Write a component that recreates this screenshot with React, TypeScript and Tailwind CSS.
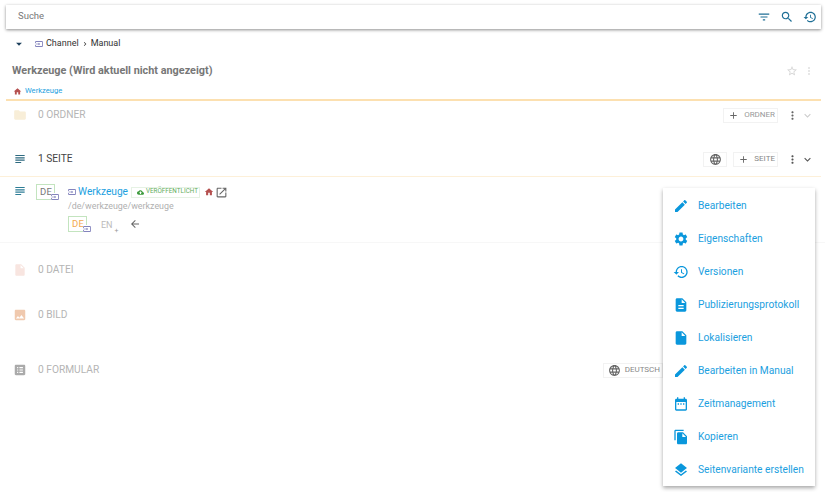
const P: Record<string, string> = {
  filter: "M10 18h4v-2h-4v2zM3 6v2h18V6H3zm3 7h12v-2H6v2z",
  search: "M15.5 14h-.79l-.28-.27C15.41 12.59 16 11.11 16 9.5 16 5.91 13.09 3 9.5 3S3 5.91 3 9.5 5.91 16 9.5 16c1.61 0 3.09-.59 4.23-1.57l.27.28v.79l5 4.99L20.49 19l-4.99-5zm-6 0C7.01 14 5 11.99 5 9.5S7.01 5 9.5 5 14 7.01 14 9.5 11.99 14 9.5 14z",
  history: "M13 3c-4.97 0-9 4.03-9 9H1l3.89 3.89.07.14L9 12H6c0-3.87 3.13-7 7-7s7 3.13 7 7-3.13 7-7 7c-1.93 0-3.68-.79-4.94-2.06l-1.42 1.42C8.27 19.99 10.51 21 13 21c4.97 0 9-4.03 9-9s-4.03-9-9-9zm-1 5v5l4.28 2.54.72-1.21-3.5-2.08V8H12z",
  edit: "M3 17.25V21h3.75L17.81 9.94l-3.75-3.75L3 17.25zM20.71 7.04c.39-.39.39-1.02 0-1.41l-2.34-2.34c-.39-.39-1.02-.39-1.41 0l-1.83 1.83 3.75 3.75 1.83-1.83z",
  settings: "M19.14 12.94c.04-.3.06-.61.06-.94 0-.32-.02-.64-.07-.94l2.03-1.58c.18-.14.23-.41.12-.61l-1.92-3.32c-.12-.22-.37-.29-.59-.22l-2.39.96c-.5-.38-1.03-.7-1.62-.94l-.36-2.54c-.04-.24-.24-.41-.48-.41h-3.84c-.24 0-.43.17-.47.41l-.36 2.54c-.59.24-1.13.57-1.62.94l-2.39-.96c-.22-.08-.47 0-.59.22L2.74 8.87c-.12.21-.08.47.12.61l2.03 1.58c-.05.3-.09.63-.09.94s.02.64.07.94l-2.03 1.58c-.18.14-.23.41-.12.61l1.92 3.32c.12.22.37.29.59.22l2.39-.96c.5.38 1.03.7 1.62.94l.36 2.54c.05.24.24.41.48.41h3.84c.24 0 .44-.17.47-.41l.36-2.54c.59-.24 1.13-.56 1.62-.94l2.39.96c.22.08.47 0 .59-.22l1.92-3.32c.12-.22.07-.47-.12-.61l-2.01-1.58zM12 15.6c-1.98 0-3.6-1.62-3.6-3.6s1.62-3.6 3.6-3.6 3.6 1.62 3.6 3.6-1.62 3.6-3.6 3.6z",
  description: "M14 2H6c-1.1 0-1.99.9-1.99 2L4 20c0 1.1.89 2 1.99 2H18c1.1 0 2-.9 2-2V8l-6-6zm2 16H8v-2h8v2zm0-4H8v-2h8v2zm-3-5V3.5L18.5 9H13z",
  file: "M6 2c-1.1 0-1.99.9-1.99 2L4 20c0 1.1.89 2 1.99 2H18c1.1 0 2-.9 2-2V8l-6-6H6zm7 7V3.5L18.5 9H13z",
  calendar: "M9 11H7v2h2v-2zm4 0h-2v2h2v-2zm4 0h-2v2h2v-2zm2-7h-1V2h-2v2H8V2H6v2H5c-1.11 0-1.99.9-1.99 2L3 20c0 1.1.89 2 2 2h14c1.1 0 2-.9 2-2V6c0-1.1-.9-2-2-2zm0 16H5V9h14v11z",
  copy: "M16 1H4c-1.1 0-2 .9-2 2v14h2V3h12V1zm-1 4l6 6v10c0 1.1-.9 2-2 2H7.99C6.89 23 6 22.1 6 21l.01-14c0-1.1.89-2 1.99-2h7zm-1 7h5.5L14 6.5V12z",
  layers: "M11.99 18.54l-7.37-5.73L3 14.07l9 7 9-7-1.63-1.27-7.38 5.74zM12 16l7.36-5.73L21 9l-9-7-9 7 1.63 1.27L12 16z",
  folder: "M10 4H4c-1.1 0-1.99.9-1.99 2L2 18c0 1.1.9 2 2 2h16c1.1 0 2-.9 2-2V8c0-1.1-.9-2-2-2h-8l-2-2z",
  subject: "M14 17H4v2h10v-2zm6-8H4v2h16V9zM4 15h16v-2H4v2zM4 5v2h16V5H4z",
  image: "M21 19V5c0-1.1-.9-2-2-2H5c-1.1 0-2 .9-2 2v14c0 1.1.9 2 2 2h14c1.1 0 2-.9 2-2zM8.5 13.5l2.5 3.01L14.5 12l4.5 6H5l3.5-4.5z",
  form: "M19 3H5c-1.1 0-2 .9-2 2v14c0 1.1.9 2 2 2h14c1.1 0 2-.9 2-2V5c0-1.1-.9-2-2-2zM9 17H7v-2h2v2zm0-4H7v-2h2v2zm0-4H7V7h2v2zm8 8h-6v-2h6v2zm0-4h-6v-2h6v2zm0-4h-6V7h6v2z",
  home: "M10 20v-6h4v6h5v-8h3L12 3 2 12h3v8z",
  open: "M19 19H5V5h7V3H5c-1.11 0-2 .9-2 2v14c0 1.1.89 2 2 2h14c1.1 0 2-.9 2-2v-7h-2v7zM14 3v2h3.59l-9.83 9.83 1.41 1.41L19 6.41V10h2V3h-7z",
  language: "M11.99 2C6.47 2 2 6.48 2 12s4.47 10 9.99 10C17.52 22 22 17.52 22 12S17.52 2 11.99 2zm6.93 6h-2.95c-.32-1.25-.78-2.45-1.38-3.56 1.84.63 3.37 1.91 4.33 3.56zM12 4.04c.83 1.2 1.48 2.53 1.91 3.96h-3.82c.43-1.43 1.08-2.76 1.91-3.96zM4.26 14C4.1 13.36 4 12.69 4 12s.1-1.36.26-2h3.38c-.08.66-.14 1.32-.14 2 0 .68.06 1.34.14 2H4.26zm.82 2h2.95c.32 1.25.78 2.45 1.38 3.56-1.84-.63-3.37-1.9-4.33-3.56zm2.95-8H5.08c.96-1.66 2.49-2.93 4.33-3.56C8.81 5.55 8.35 6.75 8.03 8zM12 19.96c-.83-1.2-1.48-2.53-1.91-3.96h3.82c-.43 1.43-1.08 2.76-1.91 3.96zM14.34 14H9.66c-.09-.66-.16-1.32-.16-2 0-.68.07-1.35.16-2h4.68c.09.65.16 1.32.16 2 0 .68-.07 1.34-.16 2zm.25 5.56c.6-1.11 1.06-2.31 1.38-3.56h2.95c-.96 1.65-2.49 2.93-4.33 3.56zM16.36 14c.08-.66.14-1.32.14-2 0-.68-.06-1.34-.14-2h3.38c.16.64.26 1.31.26 2s-.1 1.36-.26 2h-3.38z",
  star: "M22 9.24l-7.19-.62L12 2 9.19 8.63 2 9.24l5.46 4.73L5.82 21 12 17.27 18.18 21l-1.63-7.03L22 9.24zM12 15.4l-3.76 2.27 1-4.28-3.32-2.88 4.38-.38L12 6.1l1.71 4.04 4.38.38-3.32 2.88 1 4.28L12 15.4z",
  more: "M12 8c1.1 0 2-.9 2-2s-.9-2-2-2-2 .9-2 2 .9 2 2 2zm0 2c-1.1 0-2 .9-2 2s.9 2 2 2 2-.9 2-2-.9-2-2-2zm0 6c-1.1 0-2 .9-2 2s.9 2 2 2 2-.9 2-2-.9-2-2-2z",
  expand: "M16.59 8.59L12 13.17 7.41 8.59 6 10l6 6 6-6z",
  add: "M19 13h-6v6h-2v-6H5v-2h6V5h2v6h6v2z",
  drop: "M7 10l5 5 5-5z",
  chevron: "M10 6L8.59 7.41 13.17 12l-4.58 4.59L10 18l6-6z",
  back: "M20 11H7.83l5.59-5.59L12 4l-8 8 8 8 1.41-1.41L7.83 13H20v-2z",
  cloud: "M19.35 10.04C18.67 6.59 15.64 4 12 4 9.11 4 6.6 5.64 5.35 8.04 2.34 8.36 0 10.91 0 14c0 3.31 2.69 6 6 6h13c2.76 0 5-2.24 5-5 0-2.64-2.05-4.78-4.65-4.96zM14 13v4h-4v-4H7l5-5 5 5h-3z",
  input: "M21 3.01H3c-1.1 0-2 .9-2 2V9h2V4.99h18v14.03H3V15H1v4.01c0 1.1.9 1.98 2 1.98h18c1.1 0 2-.88 2-1.98v-14c0-1.11-.9-2-2-2zM11 16l4-4-4-4v3H1v2h10v3z",
};

function I({ n, s, c }: { n: string; s: string; c: string }) {
  return (
    <svg viewBox="0 0 24 24" className={`${s} ${c} shrink-0 fill-current`}>
      <path d={P[n]} />
    </svg>
  );
}

function Btn({ label, dim }: { label: string; dim?: boolean }) {
  return (
    <div className={`flex h-[15px] items-center gap-[5px] border border-[#f2f2f2] pl-[4px] pr-[2px] text-[8px] ${dim ? "text-[#999]" : "text-[#888]"}`}>
      <I n="add" s="w-[11px] h-[11px]" c="text-[#666]" />
      <span>{label}</span>
    </div>
  );
}

function Flag({ code, color, left }: { code: string; color: string; left: string }) {
  return (
    <div className={`relative ${left}`}>
      <div className={`flex h-[16px] w-[19px] items-center justify-start border border-[#c3e4bf] pl-[3px] text-[9.5px] tracking-[0.2px] ${color}`}>
        {code}
      </div>
      <I n="input" s="absolute -right-[4px] -bottom-[1px] w-[8px] h-[8px] bg-white" c="text-[#5c5ca8]" />
    </div>
  );
}

function Section({ icon, iconColor, label, h, children }: { icon: string; iconColor: string; label: string; h: string; children?: React.ReactNode }) {
  return (
    <div className={`flex ${h} items-center pl-[13px] pr-[11px]`}>
      <I n={icon} s="w-[14px] h-[14px]" c={iconColor} />
      <span className="ml-[11px] text-[10.2px] text-[#b5b5b5]">{label}</span>
      <div className="ml-auto flex items-center">{children}</div>
    </div>
  );
}

const menu: [string, string][] = [
  ["edit", "Bearbeiten"],
  ["settings", "Eigenschaften"],
  ["history", "Versionen"],
  ["description", "Publizierungsprotokoll"],
  ["file", "Lokalisieren"],
  ["edit", "Bearbeiten in Manual"],
  ["calendar", "Zeitmanagement"],
  ["copy", "Kopieren"],
  ["layers", "Seitenvariante erstellen"],
];

export default function App() {
  return (
    <div className="relative h-[492px] w-[825px] overflow-hidden bg-white font-['Roboto',sans-serif]">
      <div className="pl-[6px] pr-[4px] pt-[5px]">
        <div className="flex h-[24px] items-center bg-white pb-[1px] pl-[12px] pr-[4px] text-[9.5px] text-[#777] shadow-[0_1px_3px_rgba(0,0,0,0.45)]">
          <span>Suche</span>
          <div className="ml-auto flex items-center gap-[9px]">
            <I n="filter" s="w-[14px] h-[14px]" c="text-[#1f6f96]" />
            <I n="search" s="w-[14px] h-[14px]" c="text-[#1f6f96]" />
            <I n="history" s="w-[14px] h-[14px]" c="text-[#1f6f96]" />
          </div>
        </div>
      </div>

      <div className="mt-[8px] flex h-[13px] items-center pl-[12px] text-[9px] text-[#333]">
        <I n="drop" s="w-[14px] h-[14px]" c="text-[#1c3f5c]" />
        <I n="input" s="ml-[9px] w-[8px] h-[8px]" c="text-[#5c5ca8]" />
        <span className="ml-[3px]">Channel</span>
        <I n="chevron" s="mx-[2px] w-[8px] h-[8px]" c="text-[#333]" />
        <span>Manual</span>
      </div>

      <div className="mt-[13px] flex h-[16px] items-center pl-[12px] pr-[10px]">
        <span className="text-[10.85px] font-bold text-[#777]">Werkzeuge (Wird aktuell nicht angezeigt)</span>
        <I n="star" s="ml-auto w-[12px] h-[12px]" c="text-[#d5d5d5]" />
        <I n="more" s="ml-[5px] w-[12px] h-[12px]" c="text-[#e2e2e2]" />
      </div>

      <div className="mt-[5px] flex h-[14px] items-center pl-[13px] text-[7.6px] text-[#1ca0e0]">
        <I n="home" s="w-[9px] h-[9px]" c="text-[#b5504f]" />
        <span className="ml-[3px]">Werkzeuge</span>
      </div>

      <div className="ml-[6px] mr-[4px] mt-[1px] h-[2px] bg-[#fce0b0]" />

      <Section icon="folder" iconColor="text-[#f8eed8]" label="0 ORDNER" h="h-[28px]">
        <Btn label="ORDNER" dim />
        <I n="more" s="ml-[8px] w-[13px] h-[13px]" c="text-[#666]" />
        <I n="expand" s="ml-[2px] w-[13px] h-[13px]" c="text-[#ccc]" />
      </Section>

      <div className="mr-[4px] mt-[16px] flex h-[32px] items-center border-b border-[#fdf0d9] pb-[3px] pl-[13px] pr-[7px]">
        <I n="subject" s="w-[14px] h-[14px]" c="text-[#2e6a80]" />
        <span className="ml-[11px] text-[10.2px] text-[#444]">1 SEITE</span>
        <div className="ml-auto flex items-center">
          <div className="flex h-[15px] w-[24px] items-center justify-center border border-[#f2f2f2]">
            <I n="language" s="w-[13px] h-[13px]" c="text-[#666]" />
          </div>
          <div className="ml-[6px]"><Btn label="SEITE" /></div>
          <I n="more" s="ml-[8px] w-[13px] h-[13px]" c="text-[#555]" />
          <I n="expand" s="ml-[2px] w-[13px] h-[13px]" c="text-[#555]" />
        </div>
      </div>

      <div className="flex h-[66px] items-start border-b border-[#f7f7f7] pl-[13px] pt-[7px]">
        <I n="subject" s="w-[14px] h-[14px]" c="text-[#2e7d96]" />
        <Flag code="DE" color="text-[#777]" left="ml-[9px]" />
        <div className="ml-[13px] flex flex-col">
          <div className="flex h-[16px] items-center">
            <I n="input" s="w-[8px] h-[8px]" c="text-[#5c5ca8]" />
            <span className="ml-[2px] text-[10.2px] text-[#1ca0e0]">Werkzeuge</span>
            <div className="ml-[3px] flex h-[11px] items-center border border-[#e6f2e4] pl-[5px] pr-[1px] text-[6.3px] text-[#63ad5c]">
              <I n="cloud" s="mr-[2px] w-[7px] h-[7px]" c="text-[#3d9b3d]" />
              VERÖFFENTLICHT
            </div>
            <I n="home" s="ml-[4px] w-[10px] h-[10px]" c="text-[#b5504f]" />
            <I n="open" s="ml-[1px] w-[13px] h-[13px]" c="text-[#666]" />
          </div>
          <span className="text-[8.9px] leading-[12px] text-[#b0b0b0]">/de/werkzeuge/werkzeuge</span>
          <div className="mt-[3px] flex items-center">
            <Flag code="DE" color="text-[#f3a94e]" left="" />
            <div className="relative ml-[14px] mt-[4px] text-[9px] text-[#bbb]">
              EN
              <span className="absolute -right-[6px] top-[7px] text-[7px] text-[#999]">+</span>
            </div>
            <I n="back" s="ml-[16px] w-[12px] h-[12px]" c="text-[#666]" />
          </div>
        </div>
      </div>

      <Section icon="file" iconColor="text-[#f8e5e0]" label="0 DATEI" h="mt-[14px] h-[26px]" />
      <Section icon="image" iconColor="text-[#f0c9ae]" label="0 BILD" h="mt-[19px] h-[26px]" />
      <Section icon="form" iconColor="text-[#aaaaaa]" label="0 FORMULAR" h="mt-[29px] h-[26px]">
        <div className="mr-[151px] flex h-[15px] items-center gap-[4px] border border-[#f2f2f2] pl-[4px] pr-[2px] text-[8px] text-[#888]">
          <I n="language" s="w-[13px] h-[13px]" c="text-[#666]" />
          DEUTSCH
        </div>
      </Section>

      <div className="absolute left-[663px] top-[188px] flex h-[298px] w-[152px] flex-col justify-center bg-white pt-[1px] shadow-[0_2px_4px_rgba(0,0,0,0.35)]">
        {menu.map(([icon, label]) => (
          <div key={label} className="flex h-[33px] shrink-0 items-center pl-[10px]">
            <I n={icon} s="w-[16px] h-[16px]" c="text-[#0a97dc]" />
            <span className="ml-[9px] whitespace-nowrap text-[10.2px] text-[#1ca0e0]">{label}</span>
          </div>
        ))}
      </div>
    </div>
  );
}
